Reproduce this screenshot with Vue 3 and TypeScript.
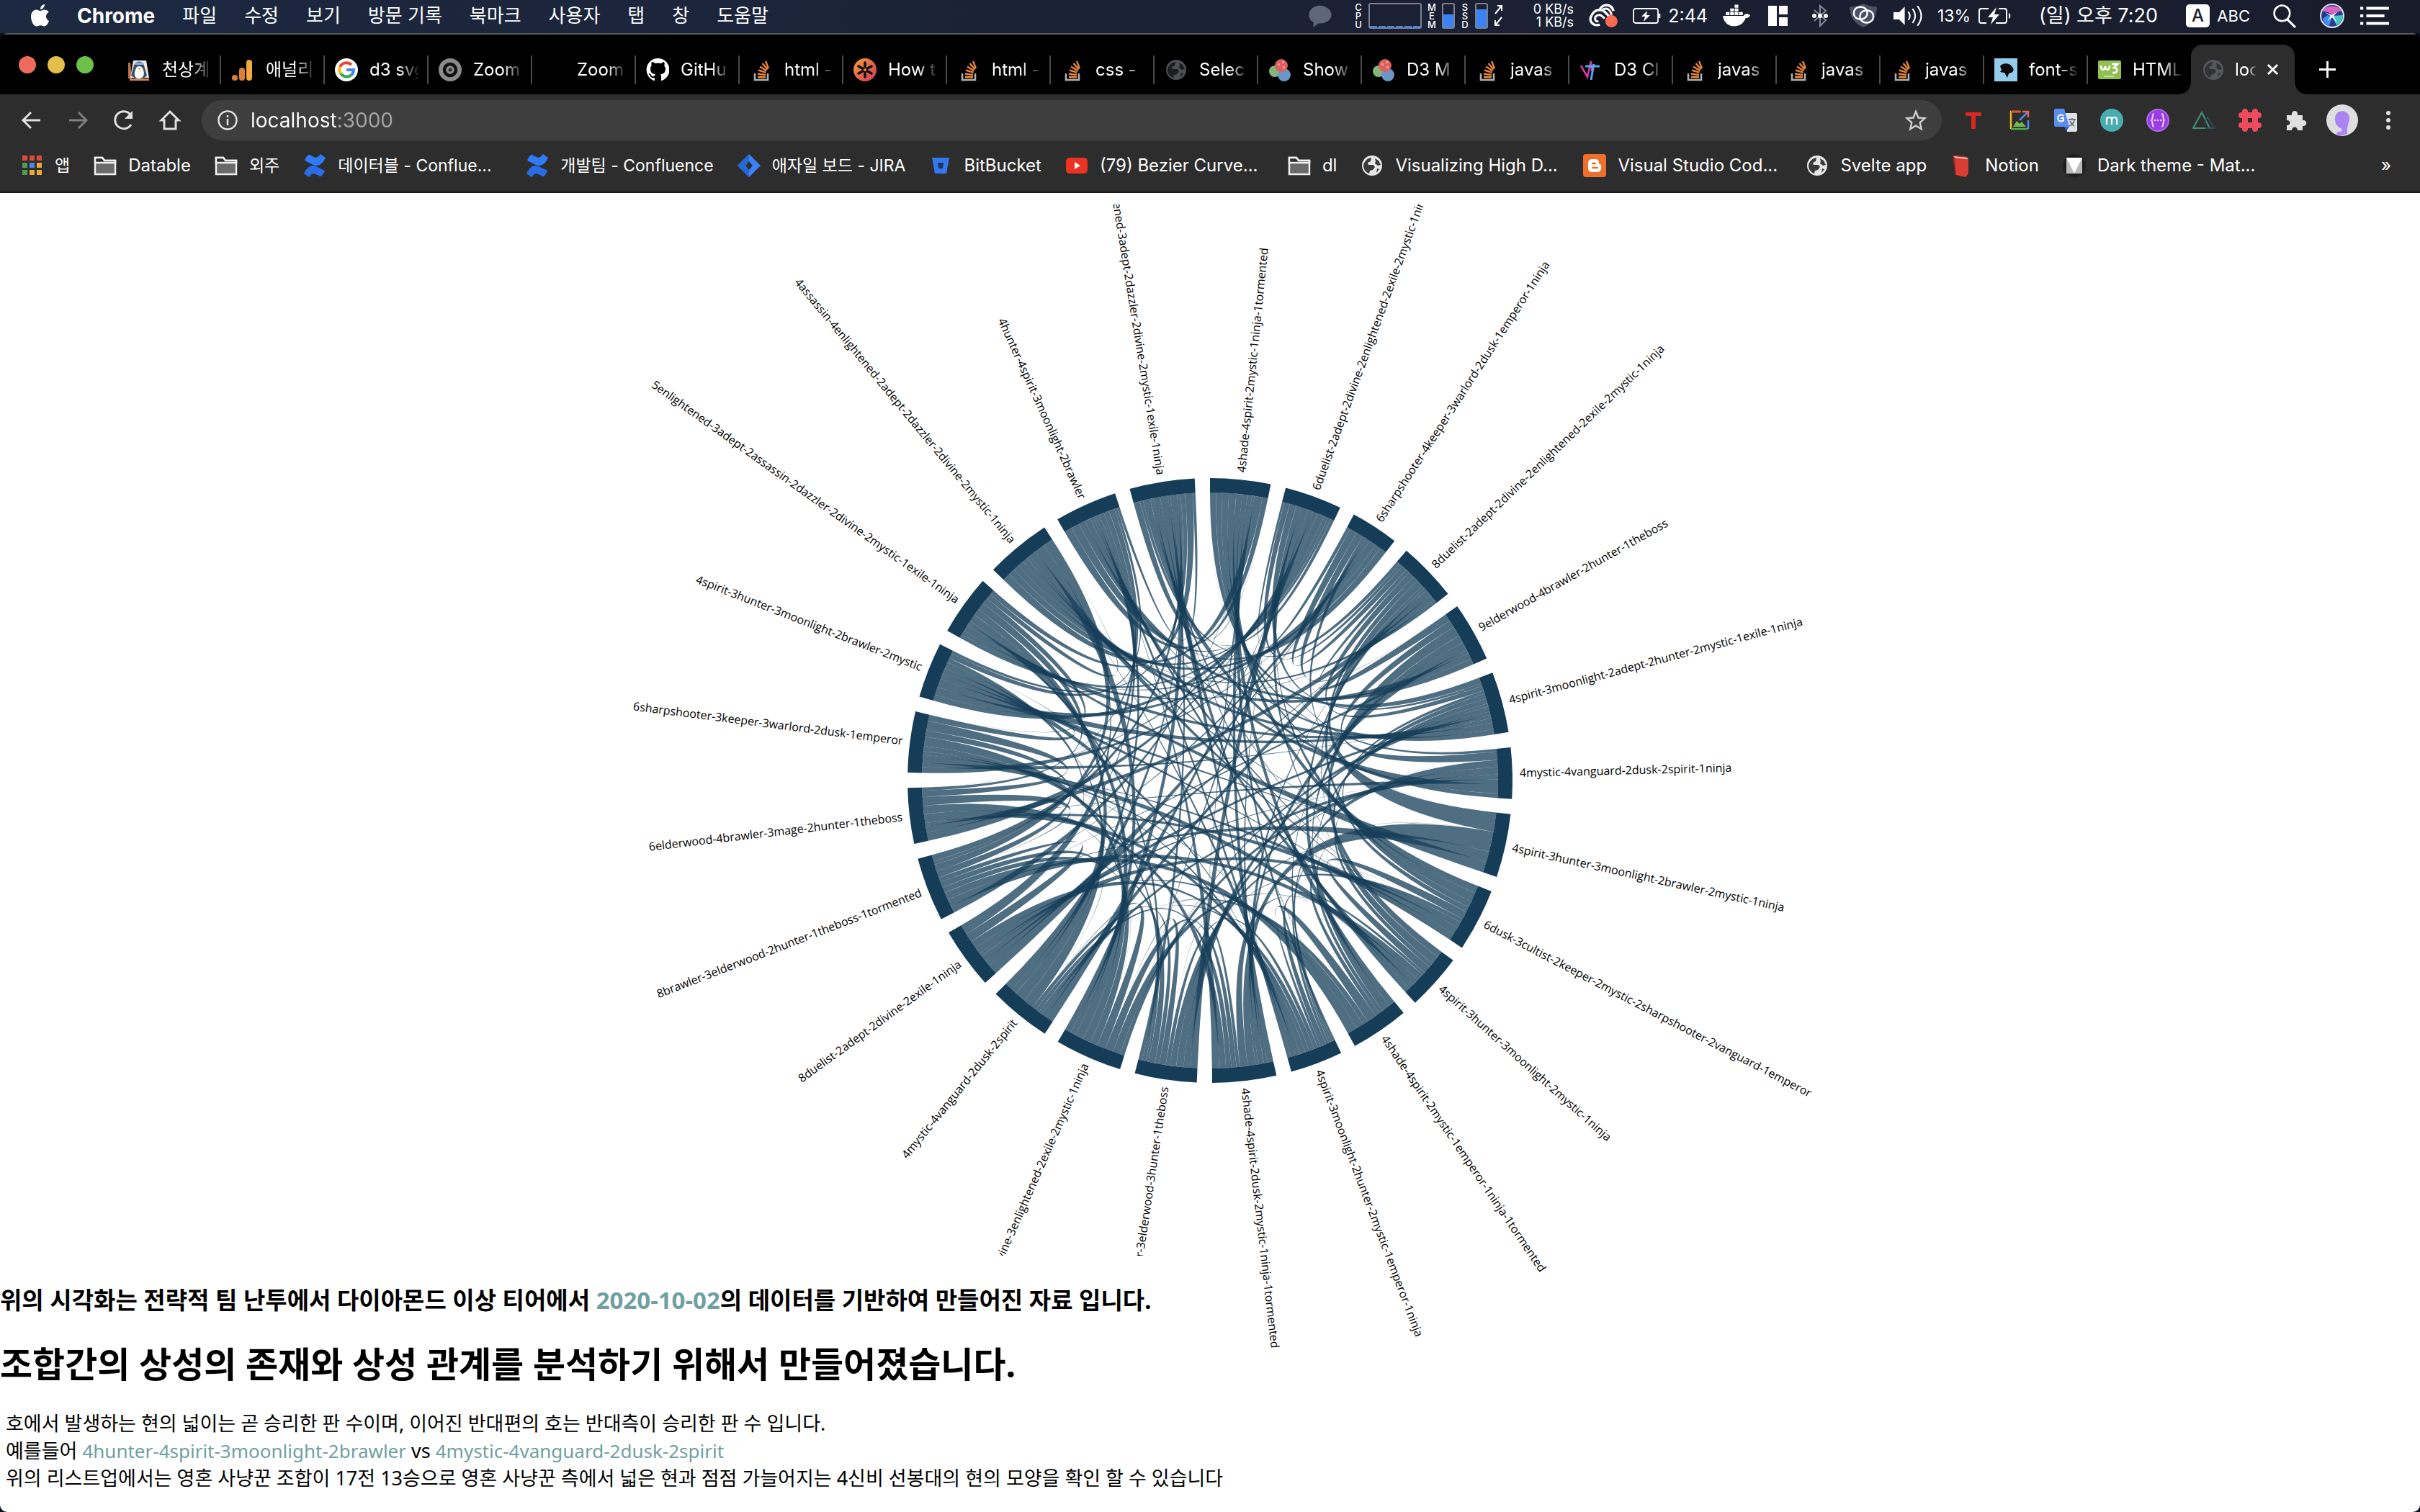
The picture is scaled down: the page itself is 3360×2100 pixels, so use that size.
<script setup lang="ts">
import { ref } from 'vue'

interface Group { label: string; start: number; end: number }
interface Tab { icon: string; title: string; active?: boolean }
interface Bookmark { icon: string; title: string; hangul?: boolean; cut?: boolean }

/* ---------- icons ---------- */
const svg = (body: string, box = '0 0 32 32') => `<svg viewBox="${box}" fill="none">${body}</svg>`
const globe = (disc: string, land: string) =>
  svg(`<circle cx="16" cy="16" r="14" fill="${disc}"/><path d="M4 16c1-6 5-10 11-11l-1 5-4 2 1 3h7l2 3-3 4-4 1-1 4c-5-2-8-6-8-11zM20 6l5 3 3 6-4 1-4-3 1-3zM23 20l3 1-4 5z" fill="${land}"/>`)
const overflow = svg('<path d="M7 21v9h18v-9" stroke="#aab0b5" stroke-width="2.6"/><path d="M11 26h11" stroke="#e8853a" stroke-width="2.8"/><path d="M11 21.500l11 1.400M12 16.500l10.500 3.200M14 11.500l9.400 5.800M17.500 7l7.200 8.400M22 4l4 10" stroke="#e8853a" stroke-width="2.4"/>')
const confluence = svg('<path d="M2 8C5 3 7 0 9 1c5 3 10 6 13 1l2-2 7 5c-4 9-10 13-17 10L6 11c-2-1-3-1-4-3z" fill="#2d7bf6"/><path d="M30 24c-3 5-5 8-7 7-5-3-10-6-13-1l-2 2-7-5c4-9 10-13 17-10l8 4c2 1 3 1 4 3z" fill="#2a6be6"/>')
const folder = svg('<path d="M2 28V5h10l3 4h15v19z" fill="#6a6a6a" stroke="#f1f1f1" stroke-width="2.500"/><path d="M2 12h28V9H15l-3-4H2z" fill="#2d2d2d" stroke="#f1f1f1" stroke-width="2.500"/>')
const d3js = svg('<circle cx="9" cy="18" r="8" fill="#86b57c"/><circle cx="22" cy="23" r="9" fill="#6c96c9"/><circle cx="18" cy="10" r="9" fill="#dd5f5c"/><path d="M13 7h3v3h-3zM19 4h3v3h-3zM20 11h3v3h-3z" fill="#f09a97"/>')

const icons: Record<string, string> = {
  apple: svg('<path d="M22 17c0-4 3-6 4-6-2-3-5-3.500-6-3.500-3 0-4 1.500-6 1.500S10.500 7.500 8 7.500C4 8 1 11.500 1 17c0 7 4 13.500 7.500 13.500 2 0 3-1.300 5.500-1.300s3.500 1.300 5.500 1.300c3 0 5.500-4.500 6.500-7.500-2-1-4-3-4-6zM18 5c1.500-1.500 2-3.500 2-5-2 0-6 2-6 7 2 0 3-1 4-2z" fill="#fff"/>', '0 0 27 31'),
  bubble: svg('<path d="M18 3C9 3 2 9 2 16.500 2 22 5 26 9 28l-1 7 8-6c11 1 19-5 19-12.500S27 3 18 3z" fill="#60667a"/>', '0 0 37 36'),
  arrows: svg('<path d="M2 14L11 3M5 3h6v7M11 19L2 30M8 30H2v-7" stroke="#fff" stroke-width="2"/>', '0 0 13 34'),
  cloud: svg('<path d="M16 8C22-1 34 1 36 11M16 31C5 34-1 25 4 17c4-8 13-10 19-5l9 9" stroke="#fff" stroke-width="3.500"/><path d="M14 26c-5 1-7-5-3-8 4-3 8-1 12 4M20 9c6-4 12 0 13 8" stroke="#fff" stroke-width="3"/><circle cx="33" cy="26" r="9" fill="#f96a50"/>', '0 0 42 36'),
  power: svg('<rect x="1" y="2" width="34" height="20" rx="3" stroke="#fff" stroke-width="1.800"/><path d="M37 9v6" stroke="#fff" stroke-width="2.500"/><path d="M20 5l-8 8h5l-2 7 9-9h-5z" fill="#fff"/>', '0 0 39 24'),
  docker: svg('<path d="M1 16h28c1-2 3-3 5-3l4 2c-1 3-4 4-6 4-3 8-9 11-16 11S2 25 1 16z" fill="#fff"/><path d="M5 11h5v4H5zM11 11h5v4h-5zM17 11h5v4h-5zM23 11h5v4h-5zM11 6h5v4h-5zM17 6h5v4h-5zM17 1h5v4h-5z" fill="#fff"/>', '0 0 38 32'),
  magnet: svg('<path d="M5 1h12v28H5zM20 1h12v12H20zM20 17h12v12H20z" fill="#fff"/>', '0 0 38 30'),
  bluetooth: svg('<path d="M11 9l16 14-8 8V3l8 7-16 14" stroke="#858a99" stroke-width="2"/><circle cx="11" cy="17" r="3" fill="#fff"/><circle cx="19" cy="17" r="3" fill="#fff"/><circle cx="27" cy="17" r="3" fill="#fff"/>', '0 0 38 34'),
  shield: svg('<path d="M21 0c5 3 12 4 20 5 0 14-7 24-20 30C8 29 1 19 1 5 9 4 16 3 21 0z" fill="#4b5164"/><g stroke="#fff" stroke-width="2.600"><rect x="7" y="5" width="20" height="18" rx="9"/><rect x="16" y="10" width="20" height="18" rx="9"/></g>', '0 0 42 36'),
  volume: svg('<path d="M1 12h8l8-8v26l-8-8H1z" fill="#fff"/><path d="M22 11c3 4 3 8 0 12M28 7c5 6 5 14 0 20M35 3c7 9 7 19 0 28" stroke="#fff" stroke-width="2.200"/>', '0 0 43 34'),
  battery: svg('<path d="M15 2H5Q2 2 2 5v14q0 3 3 3h7M29 2h8q3 0 3 3v14q0 3-3 3H25" stroke="#fff" stroke-width="2"/><path d="M43 8c3 1 3 7 0 8z" fill="#fff"/><path d="M26 0L14 14h7l-3 10 12-14h-7z" fill="#fff"/>', '0 0 46 24'),
  search: svg('<circle cx="13" cy="13" r="10.500" stroke="#fff" stroke-width="2.500"/><path d="M20 21l11 11" stroke="#fff" stroke-width="3"/>', '0 0 33 33'),
  siri: svg('<circle cx="18" cy="17" r="16" fill="#283a8c" stroke="#dfe3ee" stroke-width="2"/><path d="M4 11C8 2 26 0 32 11c-6-1-10 2-13 6C15 12 9 10 4 11z" fill="#d864c0"/><path d="M5 22c4-6 9-7 13-4l-4 13c-5-2-8-5-9-9z" fill="#3f8ff0"/><path d="M18 17l15-1c0 6-3 11-9 14z" fill="#43c8c4"/><path d="M8 12l10 4 8-5-6 6 4 9-6-7-6 5 4-7z" fill="#fff"/>', '0 0 36 34'),
  list: svg('<path d="M1 2h4v4H1zM1 12h4v4H1zM1 22h4v4H1zM9 2h30v4H9zM9 12h24v4H9zM9 22h30v4H9z" fill="#fff"/>', '0 0 40 28'),

  penguin: svg('<path d="M1 6h3l2 22H1z" fill="#b8714a"/><path d="M8 3h18l4 24H4z" fill="#efe6dd"/><path d="M9 10C10 3 22 3 23 10l4 14-5 4H11l-6-4z" fill="#3d4f6b"/><path d="M11 6h11l1 3H10z" fill="#7fb1f0"/><path d="M12 14c0-4 8-4 9 0 3 5 3 14-5 14s-7-9-4-14z" fill="#fff"/><path d="M14 13h5l-2.500 3z" fill="#e8a53a"/><path d="M3 28h27v3H3z" fill="#c98a60"/>'),
  analytics: svg('<rect x="21" y="2" width="8" height="29" rx="4" fill="#f2a93b"/><rect x="11" y="13" width="8" height="18" rx="4" fill="#dd7f31"/><circle cx="5" cy="27" r="4" fill="#dd7f31"/>'),
  google: svg('<circle cx="16" cy="16" r="16" fill="#fff"/><path d="M23 9a10 10 0 0 0-16 3" stroke="#ea4335" stroke-width="4"/><path d="M7 12a10 10 0 0 0 1 9" stroke="#fbbc05" stroke-width="4"/><path d="M8 21a10 10 0 0 0 15 2" stroke="#34a853" stroke-width="4"/><path d="M23 23a10 10 0 0 0 3-7H16" stroke="#4285f4" stroke-width="4"/>'),
  ring: svg('<circle cx="16" cy="16" r="16" fill="#8b8b8b"/><circle cx="16" cy="16" r="8" stroke="#111" stroke-width="4.500"/><circle cx="16" cy="16" r="2.500" fill="#333"/>'),
  blank: svg(''),
  github: svg('<path d="M16 0a16 16 0 0 0-5 31c1 0 1-.4 1-1v-3c-5 1-6-2-6-2-1-2-2-3-2-3-1-1 0-1 0-1 2 0 3 2 3 2 1 3 4 2 5 1 0-1 1-2 1-2-4 0-7-2-7-8 0-2 1-3 2-4-1-1-1-3 0-5 0 0 2 0 5 2a16 16 0 0 1 8 0c3-2 4-2 4-2 1 2 1 4 0 5 1 1 2 3 2 4 0 6-3 8-7 8 1 1 1 2 1 3v5c0 1 0 1 1 1A16 16 0 0 0 16 0z" fill="#fff"/>'),
  overflow,
  asterisk: svg('<defs><linearGradient id="warm" x1="0" y1="0" x2="1" y2="1"><stop offset="0" stop-color="#f7a136"/><stop offset="1" stop-color="#d1335b"/></linearGradient></defs><circle cx="16" cy="16" r="16" fill="url(#warm)"/><path d="M16 6v20M7 11l18 10M25 11L7 21" stroke="#111" stroke-width="3.600" stroke-linecap="round"/><circle cx="16" cy="16" r="2" fill="#f08a3c"/>'),
  globeDim: globe('#4d4f54', '#1d1d1f'),
  globeTab: globe('#55575d', '#303236'),
  globeLight: globe('#e6e6e6', '#3a3a3a'),
  d3js,
  chart: svg('<path d="M2 10l9 16 5-22 1 14" stroke="#d43ba4" stroke-width="2.600"/><path d="M16 30L20 8M8 11h20M19 14l-1 4" stroke="#55a6f2" stroke-width="3"/>'),
  head: svg('<path d="M0 0h32v32H0z" fill="#93cdee"/><path d="M8 11c3-5 13-5 16 0 4 4 3 8-1 9l-3 1-2 6-4-7-6-1 2-3z" fill="#0b0b0b"/>'),
  w3: svg('<rect y="3" width="32" height="26" rx="2" fill="#92c050"/><path d="M4 10c0 8 5 7 6 1 1 7 6 6 6-1M19 8h8l-5 5c6 0 6 8-2 7" stroke="#fff" stroke-width="2.600"/><path d="M8 25h14" stroke="#d8ebbd" stroke-width="1.500"/>'),

  back: svg('<path d="M28 16H5M15 5L4 16l11 11" stroke="#dfdfdf" stroke-width="3"/>'),
  forward: svg('<path d="M4 16h23M17 5l11 11-11 11" stroke="#7f7f7f" stroke-width="3"/>'),
  reload: svg('<path d="M26 22A12 12 0 1 1 25 8" stroke="#dfdfdf" stroke-width="3"/><path d="M28 3v11H17z" fill="#dfdfdf"/>'),
  home: svg('<path d="M4 16L16 4l12 12h-4v12H8V16z" stroke="#dfdfdf" stroke-width="3"/>'),
  info: svg('<circle cx="16" cy="16" r="12.500" stroke="#e0e0e0" stroke-width="2.500"/><path d="M16 14v9M16 9v3" stroke="#e0e0e0" stroke-width="2.600"/>'),
  star: svg('<path d="M16 4l3.500 8.500 9 .8-6.800 6 2 9L16 23.500 8.300 28.300l2-9-6.800-6 9-.8z" stroke="#cfcfcf" stroke-width="2.400"/>'),
  tee: svg('<path d="M5 5h22v5h-8v18h-6V10H5z" fill="#d6281f"/>'),
  photo: svg('<path d="M4 28V4h12" stroke="#f3b92f" stroke-width="2.500"/><path d="M4 4h14" stroke="#e8503a" stroke-width="2.500"/><path d="M4 28h24" stroke="#4fae52" stroke-width="2.500"/><path d="M28 28V16" stroke="#4a8cf0" stroke-width="2.500"/><path d="M16 16L27 5" stroke="#4a8cf0" stroke-width="2.500"/><path d="M20 4h8v8" stroke="#ef6146" stroke-width="2.500"/><path d="M7 25l5-8 4 4 3-3 6 7z" fill="#79b84c"/>'),
  translate: svg('<path d="M14 6h16q2 0 2 2v22q0 2-2 2H18z" fill="#dfe2e6"/><path d="M0 2q0-2 2-2h12l7 25H2q-2 0-2-2z" fill="#5a8df0"/><path d="M13 10a4.500 4.500 0 1 0 0 6v-3h-4" stroke="#fff" stroke-width="2"/><path d="M20 15h10M25 13v2M28 16c-1 4-4 7-7 8M22 17c1 3 3 5 6 7" stroke="#6b7480" stroke-width="1.800"/><path d="M14 25h7l-4 6z" fill="#3465c8"/>'),
  emm: svg('<circle cx="16" cy="16" r="16" fill="#48adb0"/><path d="M9 22V12M9 15c1-4 7-4 7 0v7M16 15c1-4 7-4 7 0v7" stroke="#fff" stroke-width="2.200"/>'),
  tampa: svg('<circle cx="16" cy="16" r="15" fill="#9b3be6" stroke="#a86ee0" stroke-width="2"/><path d="M11 7c-4 0-1 7-4 9 3 2 0 9 4 9M21 7c4 0 1 7 4 9-3 2 0 9-4 9" stroke="#e8d5fa" stroke-width="2"/><path d="M11 15h2v2h-2zM15 15h2v2h-2zM19 15h2v2h-2z" fill="#fff"/>'),
  nuxt: svg('<path d="M1 27L13 5l11 22z" stroke="#3f8f6e" stroke-width="2.200"/><path d="M18 27h13L21 12l-5 8" stroke="#2f4a57" stroke-width="2.200"/>'),
  hash: svg('<path d="M9 4v24M23 4v24M4 9h24M4 23h24" stroke="#ef4a5e" stroke-width="8" stroke-linecap="round"/><path d="M14 14h4v4h-4z" fill="#2d2d2d"/>'),
  puzzle: svg('<path d="M3 9h7C9 1 19 1 18 9h7v7c7-1 7 9 0 8v6h-7c0-6-8-6-8 0H3v-7c6 0 6-7 0-7z" fill="#e0e0e0"/>'),
  avatar: svg('<circle cx="22" cy="22" r="22" fill="#dedede"/><path d="M12 20C12 6 31 6 32 19c0 7-4 10-3 22l-11 3c-6-2-4-7 2-6 2 0 2-4 0-5-5-2-8-6-8-13z" fill="#ab83f2"/>', '0 0 44 44'),
  more: svg('<circle cx="16" cy="6" r="3" fill="#e0e0e0"/><circle cx="16" cy="16" r="3" fill="#e0e0e0"/><circle cx="16" cy="26" r="3" fill="#e0e0e0"/>'),

  apps: svg('<path d="M3 2h7v7H3zM13 2h7v7h-7zM23 2h7v7h-7z" fill="#e0483e"/><path d="M3 12h7v7H3zM3 22h7v7H3z" fill="#4f9d55"/><path d="M13 12h7v7h-7z" fill="#4a86e8"/><path d="M23 12h7v7h-7zM13 22h7v7h-7zM23 22h7v7h-7z" fill="#e9a63a"/>'),
  folder,
  confluence,
  jira: svg('<path d="M16 0l16 16-16 16L0 16z" fill="#3b82f7"/><path d="M16 0v10l-6 6 6 6v10L0 16z" fill="#2566d8"/><path d="M16 10l5 6-5 6-5-6z" fill="#2d2d2d"/>'),
  bitbucket: svg('<path d="M4 5h24l-4 22H8z" fill="#3478f0"/><path d="M12 12h8l-1 8h-6z" fill="#203457"/>'),
  youtube: svg('<rect x="1" y="5" width="30" height="22" rx="5" fill="#ea3323"/><path d="M13 11l8 5-8 5z" fill="#fff"/>'),
  blogger: svg('<rect width="32" height="32" rx="4" fill="#ed702d"/><path d="M13 7h4c4 0 5 3 5 6 0 2 3 0 3 3v3c0 4-2 6-6 6h-6c-4 0-6-2-6-6v-6c0-4 2-6 6-6z" fill="#fff"/><path d="M13 13h4M13 19h7" stroke="#ed702d" stroke-width="2.400" stroke-linecap="round"/>'),
  book: svg('<path d="M3 3l4-2 15 2 3 4v20l-4 4-14-2z" fill="#9d2a20"/><path d="M6 5l19 2v20l-4 5-13-3z" fill="#d93d33"/><path d="M4 3l19 2 2 2-18-2z" fill="#f3e7e2"/>'),
  material: svg('<circle cx="16" cy="16" r="16" fill="#1f1f1f"/><path d="M5 5h22v22H5z" fill="#b9b9b9"/><path d="M5 5h22L16 27z" fill="#fff"/>'),
}

/* ---------- browser furniture ---------- */
const menus = ['파일', '수정', '보기', '방문 기록', '북마크', '사용자', '탭', '창', '도움말']
const tabs: Tab[] = [
  { icon: 'penguin', title: '천상계' }, { icon: 'analytics', title: '애널리' }, { icon: 'google', title: 'd3 svg' },
  { icon: 'ring', title: 'Zoom' }, { icon: 'blank', title: 'Zoom' }, { icon: 'github', title: 'GitHu' },
  { icon: 'overflow', title: 'html -' }, { icon: 'asterisk', title: 'How t' }, { icon: 'overflow', title: 'html -' },
  { icon: 'overflow', title: 'css -' }, { icon: 'globeDim', title: 'Selec' }, { icon: 'd3js', title: 'Show' },
  { icon: 'd3js', title: 'D3 M' }, { icon: 'overflow', title: 'javas' }, { icon: 'chart', title: 'D3 Cl' },
  { icon: 'overflow', title: 'javas' }, { icon: 'overflow', title: 'javas' }, { icon: 'overflow', title: 'javas' },
  { icon: 'head', title: 'font-s' }, { icon: 'w3', title: 'HTML' }, { icon: 'globeTab', title: 'loc', active: true },
]
const navigation = [
  { icon: 'back', name: '뒤로' }, { icon: 'forward', name: '앞으로' }, { icon: 'reload', name: '새로고침' }, { icon: 'home', name: '홈' },
]
const extensions = ['tee', 'photo', 'translate', 'emm', 'tampa', 'nuxt', 'hash', 'puzzle', 'avatar', 'more']
const bookmarks: Bookmark[] = [
  { icon: 'apps', title: '앱', hangul: true },
  { icon: 'folder', title: 'Datable' },
  { icon: 'folder', title: '외주', hangul: true },
  { icon: 'confluence', title: '데이터블 - Conflue...', hangul: true, cut: true },
  { icon: 'confluence', title: '개발팀 - Confluence', hangul: true },
  { icon: 'jira', title: '애자일 보드 - JIRA', hangul: true },
  { icon: 'bitbucket', title: 'BitBucket' },
  { icon: 'youtube', title: '(79) Bezier Curve...', cut: true },
  { icon: 'folder', title: 'dl' },
  { icon: 'globeLight', title: 'Visualizing High D...', cut: true },
  { icon: 'blogger', title: 'Visual Studio Cod...', cut: true },
  { icon: 'globeLight', title: 'Svelte app' },
  { icon: 'book', title: 'Notion' },
  { icon: 'material', title: 'Dark theme - Mat...', cut: true },
]
const address = ref('localhost:3000')

/* ---------- chord diagram ---------- */
const OUTER = 420
const INNER = 400
const LABEL = 430
/* angles are degrees, clockwise from twelve o'clock */
const groups: Group[] = ([
  ['4shade-4spirit-2mystic-1ninja-1tormented', 0, 11.6],
  ['6duelist-2adept-2divine-2enlightened-2exile-2mystic-1ninja', 14.5, 25.5],
  ['6sharpshooter-4keeper-3warlord-2dusk-1emperor-1ninja', 28.4, 37.6],
  ['8duelist-2adept-2divine-2enlightened-2exile-2mystic-1ninja', 40.5, 51.9],
  ['9elderwood-4brawler-2hunter-1theboss', 54.8, 66.2],
  ['4spirit-3moonlight-2adept-2hunter-2mystic-1exile-1ninja', 69.1, 80.8],
  ['4mystic-4vanguard-2dusk-2spirit-1ninja', 83.7, 93.5],
  ['4spirit-3hunter-3moonlight-2brawler-2mystic-1ninja', 96.4, 108.6],
  ['6dusk-3cultist-2keeper-2mystic-2sharpshooter-2vanguard-1emperor', 111.5, 123.6],
  ['4spirit-3hunter-3moonlight-2mystic-1ninja', 126.5, 137.3],
  ['4shade-4spirit-2mystic-1emperor-1ninja-1tormented', 140.2, 151.4],
  ['4spirit-3moonlight-2hunter-2mystic-1emperor-1ninja', 154.3, 164.4],
  ['4shade-4spirit-2dusk-2mystic-1ninja-1tormented', 167.3, 179.6],
  ['6brawler-3elderwood-3hunter-1theboss', 182.5, 194.4],
  ['3divine-3enlightened-2exile-2mystic-1ninja', 197.3, 210.2],
  ['4mystic-4vanguard-2dusk-2spirit', 213.1, 225.1],
  ['8duelist-2adept-2divine-2exile-1ninja', 228, 239.8],
  ['8brawler-3elderwood-2hunter-1theboss-1tormented', 242.7, 255],
  ['6elderwood-4brawler-3mage-2hunter-1theboss', 257.9, 268.6],
  ['6sharpshooter-3keeper-3warlord-2dusk-1emperor', 271.5, 283.2],
  ['4spirit-3hunter-3moonlight-2brawler-2mystic', 286.1, 296.8],
  ['5enlightened-3adept-2assassin-2dazzler-2divine-2mystic-1exile-1ninja', 299.7, 311.3],
  ['4assassin-4enlightened-2adept-2dazzler-2divine-2mystic-1ninja', 314.2, 326.8],
  ['4hunter-4spirit-3moonlight-2brawler', 329.7, 341.7],
  ['4enlightened-3adept-2dazzler-2divine-2mystic-1exile-1ninja', 344.6, 357.1],
] as [string, number, number][]).map(([label, start, end]) => ({ label, start, end }))

const point = (deg: number, r: number) => {
  const a = (deg * Math.PI) / 180
  return `${(r * Math.sin(a)).toFixed(2)},${(-r * Math.cos(a)).toFixed(2)}`
}
const arcs = groups.map(
  ({ start, end }) =>
    `M${point(start, OUTER)}A${OUTER},${OUTER} 0 0 1 ${point(end, OUTER)}L${point(end, INNER)}A${INNER},${INNER} 0 0 0 ${point(start, INNER)}Z`,
)
const labels = groups.map(({ label, start, end }) => {
  const mid = (start + end) / 2
  const flipped = mid > 180
  return {
    label,
    anchor: flipped ? 'end' : 'start',
    transform: `rotate(${(mid - 90).toFixed(2)}) translate(${LABEL})${flipped ? ' rotate(180)' : ''}`,
  }
})

const noise = (n: number) => {
  const x = Math.sin(n * 12.9898 + 4.137) * 43758.5453
  return x - Math.floor(x)
}
const size = groups.length
const wins: number[][] = groups.map(() => new Array(size).fill(0))
for (let i = 0; i < size; i++) {
  for (let j = i + 1; j < size; j++) {
    const roll = noise(i * 31 + j * 7 + 1)
    const weight = 0.5 + noise(i * 17 + j * 53 + 5) * 1.3
    const reply = 0.5 + noise(i * 41 + j * 19 + 9) * 1.3
    if (roll < 0.16) wins[i][j] = weight
    else if (roll < 0.32) wins[j][i] = weight
    else if (roll < 0.58) {
      wins[i][j] = weight
      wins[j][i] = reply
    }
  }
}
const spans = groups.map(({ start, end }, i) => {
  const total = wins[i].reduce((sum, v) => sum + v, 0)
  let at = start
  return wins[i].map((v) => {
    const from = at
    at += (v / total) * (end - start)
    return [from, at]
  })
})
const ribbons: string[] = []
const edge = ([from, to]: number[]) =>
  to > from ? `${point(from, INNER)}A${INNER},${INNER} 0 0 1 ${point(to, INNER)}` : point(from, INNER)
for (let i = 0; i < size; i++) {
  for (let j = i + 1; j < size; j++) {
    if (wins[i][j] || wins[j][i]) ribbons.push(`M${edge(spans[i][j])}Q0,0 ${edge(spans[j][i])}Q0,0 ${point(spans[i][j][0], INNER)}Z`)
  }
}
</script>

<template>
  <div class="screen">
    <header class="menubar">
      <nav class="menus" aria-label="메뉴 막대">
        <span class="apple" v-html="icons.apple"></span>
        <strong>Chrome</strong>
        <span v-for="m in menus" :key="m">{{ m }}</span>
      </nav>
      <div class="status">
        <span class="cell bubble" v-html="icons.bubble"></span>
        <div class="stats">
          <span class="stack"><i>C</i><i>P</i><i>U</i></span>
          <span class="graph"><b v-for="n in 6" :key="n"></b></span>
          <span class="stack"><i>M</i><i>E</i><i>M</i></span>
          <span class="meter half"><b></b></span>
          <span class="stack"><i>S</i><i>S</i><i>D</i></span>
          <span class="meter"><b></b></span>
          <span class="arrows" v-html="icons.arrows"></span>
        </div>
        <div class="speed"><span>0 KB/s</span><span>1 KB/s</span></div>
        <span class="cell cloud" v-html="icons.cloud"></span>
        <div class="remaining"><span class="power" v-html="icons.power"></span>2:44</div>
        <span class="cell docker" v-html="icons.docker"></span>
        <span class="cell slim" v-html="icons.magnet"></span>
        <span class="cell slim" v-html="icons.bluetooth"></span>
        <span class="cell wide" v-html="icons.shield"></span>
        <span class="cell wide" v-html="icons.volume"></span>
        <div class="charge">13%<span class="battery" v-html="icons.battery"></span></div>
        <time class="clock">(일) 오후 7:20</time>
        <div class="input-source"><b>A</b>ABC</div>
        <span class="cell find" v-html="icons.search"></span>
        <span class="cell siri" v-html="icons.siri"></span>
        <span class="cell wide" v-html="icons.list"></span>
      </div>
    </header>

    <div class="window">
      <div class="tabstrip">
        <div class="lights"><i class="close"></i><i class="minimise"></i><i class="zoom"></i></div>
        <button v-for="(t, i) in tabs" :key="i" type="button" class="tab" :class="{ active: t.active }">
          <span class="icon" v-html="icons[t.icon]"></span>
          <span class="title">{{ t.title }}</span>
          <svg v-if="t.active" class="cross" viewBox="0 0 18 18"><path d="M2 2l14 14M16 2L2 16" /></svg>
        </button>
        <button type="button" class="new-tab" aria-label="새 탭">
          <svg viewBox="0 0 26 26"><path d="M13 1v24M1 13h24" /></svg>
        </button>
      </div>

      <div class="toolbar">
        <div class="tools">
          <button v-for="n in navigation" :key="n.icon" type="button" :aria-label="n.name"><span class="icon" v-html="icons[n.icon]"></span></button>
        </div>
        <label class="omnibox">
          <span class="icon" v-html="icons.info"></span>
          <input v-model="address" type="text" aria-label="주소창" />
          <span class="icon" v-html="icons.star"></span>
        </label>
        <div class="tools">
          <button v-for="e in extensions" :key="e" type="button" :aria-label="e"><span class="icon" :class="e" v-html="icons[e]"></span></button>
        </div>
      </div>

      <nav class="bookmarks" aria-label="북마크">
        <a v-for="(b, i) in bookmarks" :key="i" href="#" :class="{ hangul: b.hangul, cut: b.cut }">
          <span class="icon" v-html="icons[b.icon]"></span>
          <span class="name">{{ b.title }}</span>
        </a>
        <button type="button" class="more-marks">»</button>
      </nav>

      <main>
        <svg class="chord" viewBox="-800 -800 1600 1600" role="img" aria-label="조합간의 상성">
          <g class="groups"><path v-for="(d, i) in arcs" :key="i" :d="d" /></g>
          <g class="ribbons"><path v-for="(d, i) in ribbons" :key="i" :d="d" /></g>
          <g class="labels">
            <text v-for="l in labels" :key="l.label" dy=".35em" :transform="l.transform" :text-anchor="l.anchor">{{ l.label }}</text>
          </g>
        </svg>
        <section class="about">
          <h3>위의 시각화는 전략적 팀 난투에서 다이아몬드 이상 티어에서 <em>2020-10-02</em>의 데이터를 기반하여 만들어진 자료 입니다.</h3>
          <h2>조합간의 상성의 존재와 상성 관계를 분석하기 위해서 만들어졌습니다.</h2>
          <p>호에서 발생하는 현의 넓이는 곧 승리한 판 수이며, 이어진 반대편의 호는 반대측이 승리한 판 수 입니다.</p>
          <p>예를들어 <em>4hunter-4spirit-3moonlight-2brawler</em> vs <em>4mystic-4vanguard-2dusk-2spirit</em></p>
          <p>위의 리스트업에서는 영혼 사냥꾼 조합이 17전 13승으로 영혼 사냥꾼 측에서 넓은 현과 점점 가늘어지는 4신비 선봉대의 현의 모양을 확인 할 수 있습니다</p>
        </section>
      </main>
    </div>
  </div>
</template>

<style>
body { background: #0c0f1c; }
</style>

<style scoped>
.screen { min-height: 100vh; display: flex; flex-direction: column; font-family: Inter, "Noto Sans CJK KR", sans-serif; color: #fff; }
.screen :deep(svg) { display: block; width: 100%; height: 100%; }
button { border: 0; padding: 0; background: none; color: inherit; font: inherit; }
i { font-style: normal; }

.menubar { height: 46px; box-sizing: border-box; padding: 0 42px 3px 42px; display: flex; align-items: center; justify-content: space-between; background: linear-gradient(90deg, #1c2941, #1b2136 50%, #191c2b); font-size: 26px; line-height: 40px; white-space: nowrap; }
.menus { display: flex; align-items: center; gap: 38px; }
.menus strong { font-size: 28px; }
.apple { width: 27px; height: 31px; }
.status { display: flex; align-items: center; gap: 20px; }
.cell { display: flex; align-items: center; justify-content: center; height: 34px; }
.bubble { width: 54px; }
.cloud, .wide { width: 42px; }
.docker { width: 39px; }
.slim { width: 38px; }
.find { width: 56px; }
.siri { width: 36px; }
.stats { display: flex; align-items: center; gap: 8px; }
.stack { display: flex; flex-direction: column; align-items: center; width: 12px; font-size: 13px; line-height: 12px; font-weight: 500; }
.graph { width: 74px; height: 36px; box-sizing: border-box; border: 2px solid #7d818d; border-radius: 3px; display: flex; align-items: flex-end; gap: 2px; }
.graph b { flex: 1; height: 2px; background: #3b82f7; }
.meter { width: 18px; height: 36px; box-sizing: border-box; border: 2px solid #7d818d; border-radius: 3px; display: flex; align-items: flex-end; }
.meter b { flex: 1; height: 25px; background: #3b82f7; }
.meter.half b { height: 18px; }
.arrows { width: 13px; height: 34px; }
.speed { width: 78px; display: flex; flex-direction: column; align-items: flex-end; font-size: 18px; line-height: 18px; }
.remaining { width: 104px; display: flex; align-items: center; justify-content: space-between; font-size: 25px; }
.power { width: 39px; height: 24px; }
.charge { width: 102px; display: flex; align-items: center; justify-content: space-between; font-size: 23px; }
.battery { width: 46px; height: 24px; }
.clock { width: 203px; text-align: center; font-size: 27px; }
.input-source { width: 89px; display: flex; align-items: center; justify-content: space-between; font-size: 22px; }
.input-source b { width: 33px; height: 32px; border-radius: 5px; background: #fff; color: #1b1e2d; font-size: 24px; font-weight: 500; line-height: 32px; text-align: center; }

.window { flex: 1; display: flex; flex-direction: column; border-radius: 10px; overflow: hidden; background: #000; }
.icon { flex: none; display: block; width: 32px; height: 32px; }

.tabstrip { height: 85px; box-sizing: border-box; border-top: 2px solid #5a5a5a; padding-top: 14px; display: flex; background: #000; }
.lights { width: 162px; box-sizing: border-box; padding-left: 26px; display: flex; align-items: center; gap: 16px; padding-bottom: 14px; }
.lights i { width: 24px; height: 24px; border-radius: 50%; }
.close { background: #ee6a5f; }
.minimise { background: #e2c04b; }
.zoom { background: #6dc14a; }
.tab { position: relative; flex: none; width: 144px; box-sizing: border-box; padding: 0 11px 0 15px; display: flex; align-items: center; gap: 16px; font-size: 24px; line-height: 36px; text-align: left; }
.tab + .tab:not(.active)::before { content: ""; position: absolute; left: -1px; top: 15px; width: 2px; height: 40px; background: #4b4b4b; }
.title { flex: 1; min-width: 0; overflow: hidden; white-space: nowrap; mask-image: linear-gradient(90deg, #000 60%, transparent); }
.tab.active { background: #2d2d2d; border-radius: 16px 16px 0 0; gap: 14px; padding-right: 22px; }
.tab.active::before, .tab.active::after { content: ""; position: absolute; bottom: 0; width: 16px; height: 16px; }
.tab.active::before { left: -16px; background: radial-gradient(circle at 0 0, transparent 15px, #2d2d2d 16px); }
.tab.active::after { right: -16px; background: radial-gradient(circle at 100% 0, transparent 15px, #2d2d2d 16px); }
.tab .cross { flex: none; width: 17px; height: 17px; }
.cross path, .new-tab path { stroke: #fff; stroke-width: 3; fill: none; }
.new-tab { width: 90px; display: flex; align-items: center; justify-content: center; }
.new-tab svg { width: 25px; height: 25px; }

.toolbar { height: 72px; padding: 0 12px; display: flex; align-items: center; gap: 12px; background: #2d2d2d; }
.tools { display: flex; }
.tools button { width: 64px; height: 64px; display: flex; align-items: center; justify-content: center; }
.avatar { width: 44px; height: 44px; }
.omnibox { flex: 1; height: 56px; border-radius: 28px; box-sizing: border-box; padding: 0 20px; display: flex; align-items: center; gap: 16px; background: #3e3e3e; }
.omnibox input { flex: 1; min-width: 0; border: 0; padding: 0; outline: 0; font: 28px/40px Inter, "Noto Sans CJK KR", sans-serif; color: transparent; background: linear-gradient(90deg, #fff 120px, #a6a6a6 120px); background-clip: text; -webkit-background-clip: text; }

.bookmarks { height: 65px; box-sizing: border-box; border-bottom: 2px solid #1c1a1c; padding: 0 40px 10px 28px; display: flex; align-items: center; gap: 33px; background: #2d2d2d; font-size: 24px; line-height: 36px; white-space: nowrap; }
.bookmarks a { display: flex; align-items: center; gap: 16px; color: inherit; text-decoration: none; }
.bookmarks .hangul { font-size: 23px; }
.cut .name { width: 228px; }
.more-marks { margin-left: auto; }

main { flex: 1; background: #fff; color: #000; padding-top: 16px; font-family: "Noto Sans", "Noto Sans CJK KR", sans-serif; }
main .chord { width: 100%; height: 1600px; overflow: visible; clip-path: inset(0 0 -100px 0); }
.groups { fill: #163d58; }
.ribbons { fill: #163d58; fill-opacity: .75; }
.labels { font-family: "Open Sans", "Noto Sans", sans-serif; font-size: 16px; }
.about { position: relative; width: fit-content; margin-top: -140px; background: #fff; }
.about em { font-style: normal; color: #6f9fa1; }
h3 { margin: 0; padding-top: 38px; font-size: 33px; line-height: 48px; }
h2 { margin: 28px 0; font-size: 49px; line-height: 72px; }
p { margin: 0; padding-left: 8px; font-size: 27px; line-height: 38px; }
p em { font-size: 26px; }
</style>
